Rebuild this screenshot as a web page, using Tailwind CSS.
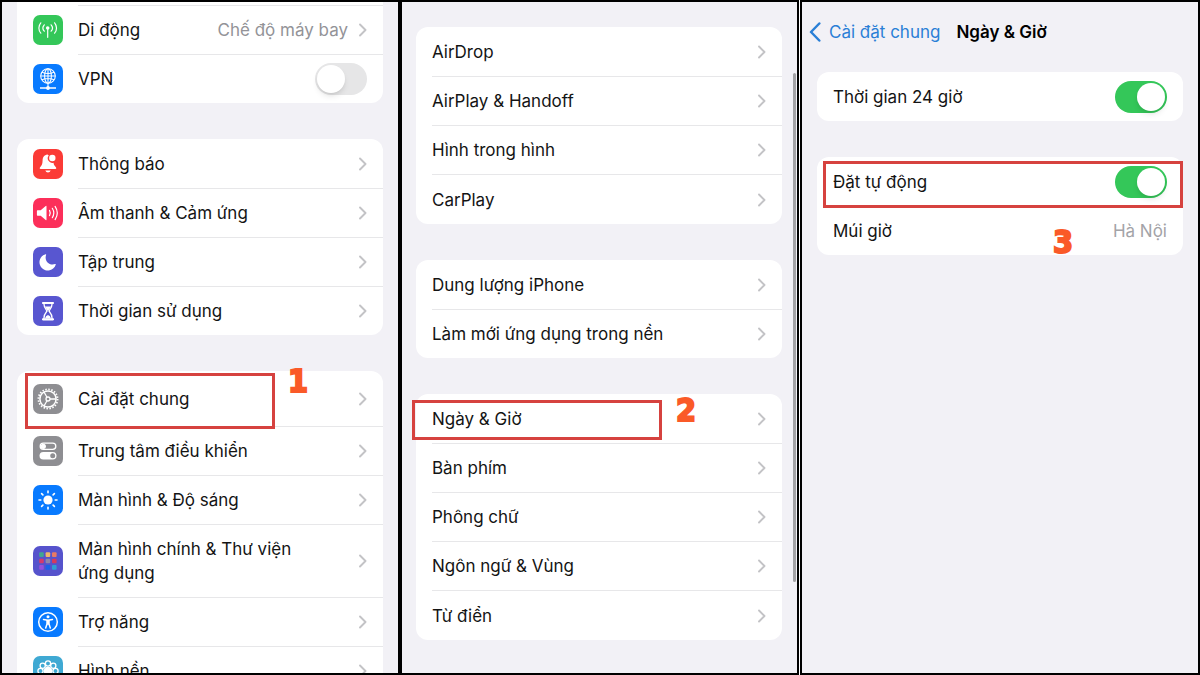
<!DOCTYPE html>
<html lang="vi">
  <head>
    <meta charset="UTF-8" />
    <meta name="viewport" content="width=device-width, initial-scale=1.0" />
    <script src="https://cdn.jsdelivr.net/npm/@tailwindcss/browser@4"></script>
    <title>Cài đặt Ngày & Giờ</title>
  </head>

  <body class="bg-white font-['Inter','Noto_Sans',sans-serif] text-[17px] leading-6 text-[#141414]">
    <svg class="hidden">
      <symbol id="chevron" viewBox="0 0 8 14">
        <path d="M1 1.5 6.5 7 1 12.5" fill="none" stroke="#c3c3c6" stroke-width="1.9" stroke-linecap="round" stroke-linejoin="round" />
      </symbol>
    </svg>

    <main class="flex h-screen">
      <!-- Step 1: Settings -->
      <section class="relative flex min-w-0 flex-1 flex-col gap-9 overflow-hidden border-2 border-black bg-[#f2f1f6] px-[15px]">
        <div class="shrink-0 rounded-b-xl bg-white pt-[3px]">
          <a href="#" class="flex items-center gap-[15px] pl-4">
            <svg class="size-[30px] shrink-0 rounded-[7px] bg-[#34c759]" viewBox="0 0 30 30" fill="none" stroke="#fff" stroke-width="1.2" stroke-linecap="round">
              <circle cx="14.7" cy="13" r="1.8" fill="#fff" stroke="none" />
              <path d="M14.7 13v9.3M11.3 9.8a4.8 4.8 0 0 0 0 6.4M18.1 9.8a4.8 4.8 0 0 1 0 6.4M7.8 7.8a8 8 0 0 0 0 10.4M21.6 7.8a8 8 0 0 1 0 10.4" />
            </svg>
            <span class="flex h-[49px] flex-1 items-center gap-[11px] border-t border-[#e7e7e9] pr-4">
              <span class="flex-1">Di động</span>
              <span class="text-[#939398]">Chế độ máy bay</span>
              <svg class="h-3.5 w-2"><use href="#chevron" /></svg>
            </span>
          </a>
          <div class="flex items-center gap-[15px] pl-4">
            <svg class="size-[30px] shrink-0 rounded-[7px] bg-[#087aff]" viewBox="0 0 30 30" fill="none" stroke="#fff" stroke-width="1.1">
              <circle cx="15" cy="12" r="7.3" />
              <ellipse cx="15" cy="12" rx="3.4" ry="7.3" />
              <path d="M15 4.7v19M7.7 12h14.6M9 8.3q6 2.5 12 0M9 15.7q6-2.5 12 0" />
              <path d="M7 24h16" stroke-width="1.5" />
              <circle cx="15" cy="24" r="1.9" fill="#fff" stroke="none" />
            </svg>
            <span class="flex h-[49px] flex-1 items-center justify-between border-t border-[#e7e7e9] pr-4">
              <label for="vpn">VPN</label>
              <input type="checkbox" role="switch" id="vpn" class="h-8 w-[52px] appearance-none rounded-full bg-[#e6e6e7] p-0.5 before:block before:size-7 before:rounded-full before:bg-white before:shadow-md checked:bg-[#34c759] checked:before:translate-x-5" />
            </span>
          </div>
        </div>

        <div class="shrink-0 rounded-xl bg-white">
          <a href="#" class="flex items-center gap-[15px] pl-4">
            <svg class="size-[30px] shrink-0 rounded-[7px] bg-[#fb3b36]" viewBox="0 0 30 30" fill="#fff">
              <path d="M14.5 5.5c-3.5.3-4.8 3-4.9 6-.1 3.5-.8 5-2.3 6.5-.8.9-.9 2 .4 2h14.600c1.3 0 1.2-1.1.4-2-1.3-1.400-2-2.700-2.200-4.300a4.500 4.500 0 0 1-4.700-7.200z" />
              <circle cx="19.3" cy="9" r="3.2" />
              <path d="M12.3 21.4h5.4q-.8 2-2.7 2t-2.7-2z" />
            </svg>
            <span class="flex h-[49px] flex-1 items-center justify-between pr-4">
              Thông báo
              <svg class="h-3.5 w-2"><use href="#chevron" /></svg>
            </span>
          </a>
          <a href="#" class="flex items-center gap-[15px] pl-4">
            <svg class="size-[30px] shrink-0 rounded-[7px] bg-[#fc2f5a]" viewBox="0 0 30 30" fill="none" stroke="#fff" stroke-width="1.2" stroke-linecap="round">
              <path d="M4.500 12.200h3.200l5-4.200q.8-.5.8.4v13.200q0 .9-.8.4l-5-4.200H4.500q-.6 0-.6-.7v-4.200q0-.7.6-.7z" fill="#fff" stroke="none" />
              <path d="M16.500 12.400q1.500 2.600 0 5.200M19.300 10.300q3 4.700 0 9.400M22.100 8.400q4.400 6.600 0 13.200" />
            </svg>
            <span class="flex h-[49px] flex-1 items-center justify-between border-t border-[#e7e7e9] pr-4">
              Âm thanh & Cảm ứng
              <svg class="h-3.5 w-2"><use href="#chevron" /></svg>
            </span>
          </a>
          <a href="#" class="flex items-center gap-[15px] pl-4">
            <svg class="size-[30px] shrink-0 rounded-[7px] bg-[#5856d0]" viewBox="0 0 30 30" fill="#fff">
              <path d="M12.600 7.200c.4-.2.7.1.5.5-2 5.800 2.600 11.300 9 9.400.5-.1.8.2.6.6A8.300 8.300 0 1 1 12.600 7.200z" />
            </svg>
            <span class="flex h-[49px] flex-1 items-center justify-between border-t border-[#e7e7e9] pr-4">
              Tập trung
              <svg class="h-3.5 w-2"><use href="#chevron" /></svg>
            </span>
          </a>
          <a href="#" class="flex items-center gap-[15px] pl-4">
            <svg class="size-[30px] shrink-0 rounded-[7px] bg-[#5856d0]" viewBox="0 0 30 30" fill="none" stroke="#fff" stroke-width="1.3">
              <path d="M10 7h10M10 23.300h10" stroke-width="2.200" stroke-linecap="round" />
              <path d="M10.800 7c0 4.500 1 5.500 3.200 8-2.200 2.500-3.200 3.500-3.200 8M19.200 7c0 4.500-1 5.500-3.200 8 2.200 2.500 3.200 3.500 3.200 8" />
              <path d="M11.600 10.500h6.800L15 15zM12 22.500q.5-2.700 3-3.600 2.500.9 3 3.600z" fill="#fff" stroke="none" />
            </svg>
            <span class="flex h-[49px] flex-1 items-center justify-between border-t border-[#e7e7e9] pr-4">
              Thời gian sử dụng
              <svg class="h-3.5 w-2"><use href="#chevron" /></svg>
            </span>
          </a>
        </div>

        <div class="shrink-0 rounded-xl bg-white">
          <a href="#" class="relative flex items-center gap-[15px] pl-4">
            <svg class="size-[30px] shrink-0 rounded-[7px] bg-[#8e8e92]" viewBox="0 0 30 30" fill="none" stroke="#fff">
              <circle cx="15" cy="15" r="9.6" stroke-width="1.8" stroke-dasharray="1.5 1.516" />
              <circle cx="15" cy="15" r="8.1" stroke-width="1.5" />
              <circle cx="15" cy="15" r="2" stroke-width="1.3" />
              <path d="M17 15h6M14 13.300l-3-5.300M14 16.700 11 22" stroke-width="1.3" />
            </svg>
            <span class="flex h-[55px] flex-1 items-center justify-between pr-4">
              Cài đặt chung
              <svg class="h-3.5 w-2"><use href="#chevron" /></svg>
            </span>
            <span class="absolute top-0.5 left-2 h-14 w-[250px] border-3 border-[#d6423f]"></span>
            <span class="absolute -top-2 left-[271px] font-['DejaVu_Sans_Condensed','DejaVu_Sans',sans-serif] text-[32px] leading-9 font-bold text-[#fa5a28] [-webkit-text-stroke:2px_#fa5a28]">1</span>
          </a>
          <a href="#" class="flex items-center gap-[15px] pl-4">
            <svg class="size-[30px] shrink-0 rounded-[7px] bg-[#8e8e92]" viewBox="0 0 30 30" fill="none" stroke="#fff" stroke-width="1.3">
              <rect x="7.2" y="7.2" width="15.6" height="6.2" rx="3.1" />
              <circle cx="10.3" cy="10.3" r="2.6" fill="#fff" stroke="none" />
              <rect x="6.5" y="16" width="17" height="7.6" rx="3.8" fill="#fff" stroke="none" />
              <circle cx="19.7" cy="19.8" r="2.5" fill="#8e8e92" stroke="none" />
            </svg>
            <span class="flex h-[49px] flex-1 items-center justify-between border-t border-[#e7e7e9] pr-4">
              Trung tâm điều khiển
              <svg class="h-3.5 w-2"><use href="#chevron" /></svg>
            </span>
          </a>
          <a href="#" class="flex items-center gap-[15px] pl-4">
            <svg class="size-[30px] shrink-0 rounded-[7px] bg-[#087aff]" viewBox="0 0 30 30" fill="none" stroke="#fff" stroke-width="1.6" stroke-linecap="round">
              <circle cx="15" cy="15" r="4.6" fill="#fff" stroke="none" />
              <path d="M15 6v1.800M15 22.200V24M6 15h1.800M22.200 15H24M8.600 8.600l1.300 1.300M20.100 20.100l1.300 1.300M8.600 21.400l1.300-1.300M20.100 9.900l1.300-1.300" />
            </svg>
            <span class="flex h-[49px] flex-1 items-center justify-between border-t border-[#e7e7e9] pr-4">
              Màn hình & Độ sáng
              <svg class="h-3.5 w-2"><use href="#chevron" /></svg>
            </span>
          </a>
          <a href="#" class="flex items-center gap-[15px] pl-4">
            <svg class="size-[30px] shrink-0 rounded-[7px] bg-[#5653cc]" viewBox="0 0 30 30">
              <rect x="6.2" y="6.3" width="4.6" height="4.6" rx="1" fill="#41a692" />
              <rect x="12.6" y="6.3" width="4.6" height="4.6" rx="1" fill="#eeb56a" />
              <rect x="19" y="6.3" width="4.6" height="4.6" rx="1" fill="#e97a62" />
              <rect x="6.2" y="12.7" width="4.6" height="4.6" rx="1" fill="#d63a6c" />
              <rect x="12.6" y="12.7" width="4.6" height="4.6" rx="1" fill="#8f86a8" />
              <rect x="19" y="12.7" width="4.6" height="4.6" rx="1" fill="#d63a5c" />
              <rect x="6.2" y="19.1" width="4.6" height="4.6" rx="1" fill="#9450dc" />
              <rect x="12.6" y="19.1" width="4.6" height="4.6" rx="1" fill="#1c63e6" />
              <rect x="19" y="19.1" width="4.6" height="4.6" rx="1" fill="#2f9fd2" />
            </svg>
            <span class="flex h-[73px] flex-1 items-center justify-between border-t border-[#e7e7e9] pr-4">
              <span>Màn hình chính & Thư viện<br />ứng dụng</span>
              <svg class="h-3.5 w-2"><use href="#chevron" /></svg>
            </span>
          </a>
          <a href="#" class="flex items-center gap-[15px] pl-4">
            <svg class="size-[30px] shrink-0 rounded-[7px] bg-[#087aff]" viewBox="0 0 30 30" fill="none" stroke="#fff" stroke-width="1.5" stroke-linecap="round" stroke-linejoin="round">
              <circle cx="15" cy="15" r="9.3" />
              <circle cx="15" cy="9.8" r="1.5" fill="#fff" stroke="none" />
              <path d="M10.500 12.500 15 13.300l4.500-.8M14 13.500v3.500l-1.300 4M16 13.500v3.500l1.300 4M15 13.500v3.500" />
            </svg>
            <span class="flex h-[49px] flex-1 items-center justify-between border-t border-[#e7e7e9] pr-4">
              Trợ năng
              <svg class="h-3.5 w-2"><use href="#chevron" /></svg>
            </span>
          </a>
          <a href="#" class="flex items-center gap-[15px] pl-4">
            <svg class="size-[30px] shrink-0 rounded-[7px] bg-[#3fa9d3]" viewBox="0 0 30 30" fill="none" stroke="#fff" stroke-width="1.3">
              <circle cx="15" cy="7.5" r="2.6" />
              <circle cx="20.3" cy="9.7" r="2.6" />
              <circle cx="22.5" cy="15" r="2.6" />
              <circle cx="20.3" cy="20.3" r="2.6" />
              <circle cx="15" cy="22.5" r="2.6" />
              <circle cx="9.7" cy="20.3" r="2.6" />
              <circle cx="7.5" cy="15" r="2.6" />
              <circle cx="9.7" cy="9.7" r="2.6" />
              <circle cx="15" cy="15" r="3.6" fill="#fff" />
            </svg>
            <span class="flex h-[49px] flex-1 items-center justify-between border-t border-[#e7e7e9] pr-4">
              Hình nền
              <svg class="h-3.5 w-2"><use href="#chevron" /></svg>
            </span>
          </a>
        </div>
      </section>
      <!-- Step 1: Settings / End -->

      <!-- Step 2: General -->
      <section class="relative flex min-w-0 flex-1 flex-col gap-9 overflow-hidden border-2 border-black bg-[#f2f1f6] pt-[25px] pr-[15px] pl-3.5">
        <div class="shrink-0 rounded-xl bg-white pl-4">
          <a href="#" class="flex h-[49px] items-center justify-between pr-4">AirDrop <svg class="h-3.5 w-2"><use href="#chevron" /></svg></a>
          <a href="#" class="flex h-[49px] items-center justify-between border-t border-[#e7e7e9] pr-4">AirPlay & Handoff <svg class="h-3.5 w-2"><use href="#chevron" /></svg></a>
          <a href="#" class="flex h-[49px] items-center justify-between border-t border-[#e7e7e9] pr-4">Hình trong hình <svg class="h-3.5 w-2"><use href="#chevron" /></svg></a>
          <a href="#" class="flex h-[50px] items-center justify-between border-t border-[#e7e7e9] pr-4">CarPlay <svg class="h-3.5 w-2"><use href="#chevron" /></svg></a>
        </div>

        <div class="shrink-0 rounded-xl bg-white pl-4">
          <a href="#" class="flex h-[49px] items-center justify-between pr-4">Dung lượng iPhone <svg class="h-3.5 w-2"><use href="#chevron" /></svg></a>
          <a href="#" class="flex h-[49px] items-center justify-between border-t border-[#e7e7e9] pr-4">Làm mới ứng dụng trong nền <svg class="h-3.5 w-2"><use href="#chevron" /></svg></a>
        </div>

        <div class="shrink-0 rounded-xl bg-white pl-4">
          <a href="#" class="relative flex h-[49px] items-center justify-between pr-4">
            Ngày & Giờ
            <svg class="h-3.5 w-2"><use href="#chevron" /></svg>
            <span class="absolute top-1.5 -left-5 h-10 w-[250px] border-3 border-[#d6423f]"></span>
            <span class="absolute -top-0.5 left-[244px] font-['DejaVu_Sans_Condensed','DejaVu_Sans',sans-serif] text-[32px] leading-9 font-bold text-[#fa5a28] [-webkit-text-stroke:2px_#fa5a28]">2</span>
          </a>
          <a href="#" class="flex h-[49px] items-center justify-between border-t border-[#e7e7e9] pr-4">Bàn phím <svg class="h-3.5 w-2"><use href="#chevron" /></svg></a>
          <a href="#" class="flex h-[49px] items-center justify-between border-t border-[#e7e7e9] pr-4">Phông chữ <svg class="h-3.5 w-2"><use href="#chevron" /></svg></a>
          <a href="#" class="flex h-[49px] items-center justify-between border-t border-[#e7e7e9] pr-4">Ngôn ngữ & Vùng <svg class="h-3.5 w-2"><use href="#chevron" /></svg></a>
          <a href="#" class="flex h-[50px] items-center justify-between border-t border-[#e7e7e9] pr-4">Từ điển <svg class="h-3.5 w-2"><use href="#chevron" /></svg></a>
        </div>

        <!-- Scroll indicator -->
        <div class="absolute top-[71px] right-px h-[509px] w-[3px] rounded-full bg-[#a3a3a6]"></div>
      </section>
      <!-- Step 2: General / End -->

      <!-- Step 3: Date & Time -->
      <section class="ml-px flex min-w-0 flex-1 flex-col overflow-hidden border-2 border-black bg-[#f2f1f6] px-[15px] pt-[18px]">
        <header class="-ml-2 flex items-center gap-4">
          <a href="#" class="flex items-center gap-2 text-[#2a7fd6]">
            <svg class="h-5 w-3" viewBox="0 0 12 20" fill="none" stroke="#2a7fd6" stroke-width="2.5" stroke-linecap="round" stroke-linejoin="round">
              <path d="M10.300 1.500 2 10l8.300 8.500" />
            </svg>
            Cài đặt chung
          </a>
          <h1 class="font-semibold text-black">Ngày & Giờ</h1>
        </header>

        <div class="mt-7 flex h-[49px] items-center justify-between rounded-xl bg-white px-4">
          <label for="time24">Thời gian 24 giờ</label>
          <input type="checkbox" role="switch" id="time24" checked class="h-8 w-[52px] appearance-none rounded-full bg-[#e6e6e7] p-0.5 before:block before:size-7 before:rounded-full before:bg-white before:shadow-md checked:bg-[#34c759] checked:before:translate-x-5" />
        </div>

        <div class="mt-9 rounded-xl bg-white">
          <div class="relative flex h-[49px] items-center justify-between px-4">
            <label for="auto">Đặt tự động</label>
            <input type="checkbox" role="switch" id="auto" checked class="h-8 w-[52px] appearance-none rounded-full bg-[#e6e6e7] p-0.5 before:block before:size-7 before:rounded-full before:bg-white before:shadow-md checked:bg-[#34c759] checked:before:translate-x-5" />
            <span class="pointer-events-none absolute inset-x-0 top-1 ml-1.5 h-[47px] border-3 border-[#d6423f]"></span>
          </div>
          <div class="relative flex h-[49px] items-center justify-between px-4">
            <span>Múi giờ</span>
            <span class="text-[#a3a3a7]">Hà Nội</span>
            <span class="absolute top-[18px] left-[236px] font-['DejaVu_Sans_Condensed','DejaVu_Sans',sans-serif] text-[32px] leading-9 font-bold text-[#fa5a28] [-webkit-text-stroke:2px_#fa5a28]">3</span>
          </div>
        </div>
      </section>
      <!-- Step 3: Date & Time / End -->
    </main>
  </body>
</html>
